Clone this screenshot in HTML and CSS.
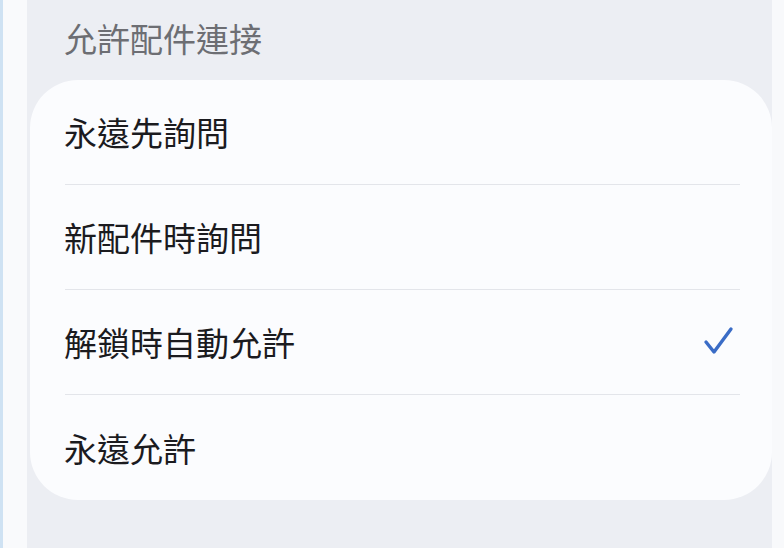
FILE: index.html
```html
<!DOCTYPE html>
<html>
<head>
  <title>允許配件連接</title>
  <link rel="stylesheet" href="styles.css">
</head>
<body>

  <div class="edge"></div>

  <div class="panel">
    <div class="header">允許配件連接</div>

    <!-- OPTIONS -->
    <div class="card">
      <div class="row">永遠先詢問</div>
      <div class="row">新配件時詢問</div>
      <div class="row selected">
        解鎖時自動允許
        <svg class="check" width="32" height="30" viewBox="0 0 32 30">
          <path d="M3 16 L11 26 L28 3" fill="none" stroke="#3a6cc6" stroke-width="3.4" stroke-linecap="round" stroke-linejoin="round"/>
        </svg>
      </div>
      <div class="row">永遠允許</div>
    </div>
  </div>

  <div class="side"></div>

</body>
</html>
```

FILE: styles.css
```css
body {
  margin: 0;
  height: 548px;
  display: flex;
  background: #f9fafc;
  font-family: "Noto Sans CJK TC", "Noto Sans", sans-serif;
  overflow: hidden;
}
.edge {
  width: 24px;
  border-left: 3px solid #cfe2f3;
  background: #f9fafc;
}
.panel {
  width: 745px;
  background: #eceef3;
}
.side {
  flex: 1;
  background: #f8f9fb;
}
.header {
  height: 80px;
  display: flex;
  align-items: center;
  padding: 0 0 4px 37px;
  box-sizing: border-box;
  font-size: 33px;
  color: #6d6e73;
}
.card {
  margin-left: 3px;
  background: #fbfcfe;
  border-radius: 48px;
}
.row {
  height: 105px;
  margin: 0 32px 0 35px;
  display: flex;
  align-items: center;
  justify-content: space-between;
  font-size: 33px;
  text-indent: -1px;
  color: #1b1b1f;
  border-bottom: 1px solid #e3e5ea;
  box-sizing: border-box;
}
.row:last-child { border-bottom: none; }
.check {
  margin-right: 5px;
  margin-top: -2px;
}
```
